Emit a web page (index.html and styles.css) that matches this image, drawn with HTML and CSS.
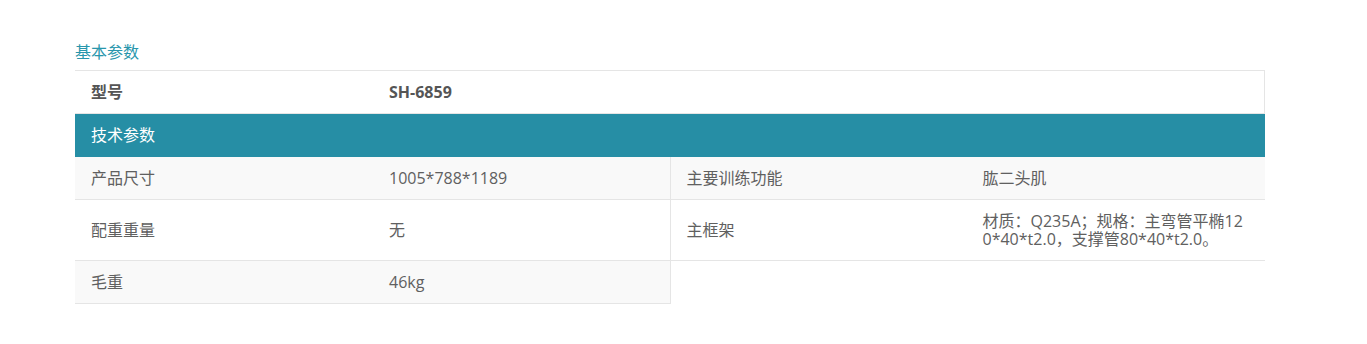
FILE: index.html
```html
<!DOCTYPE html>
<html lang="zh-CN">
<head>
  <meta charset="UTF-8">
  <meta name="viewport" content="width=device-width, initial-scale=1.0">
  <title>SH-6859 参数</title>
  <link rel="stylesheet" href="styles.css">
</head>
<body>
  <div class="params">
    <h3 class="params-title">基本参数</h3>

    <div class="model-row">
      <span class="cell label">型号</span>
      <span class="cell value">SH-6859</span>
    </div>

    <div class="section-head">技术参数</div>

    <div class="spec-list">
      <div class="spec-row">
        <div class="spec-item">
          <span class="cell label">产品尺寸</span>
          <span class="cell value">1005*788*1189</span>
        </div>
        <div class="spec-item">
          <span class="cell label">主要训练功能</span>
          <span class="cell value">肱二头肌</span>
        </div>
      </div>
      <div class="spec-row">
        <div class="spec-item">
          <span class="cell label">配重重量</span>
          <span class="cell value">无</span>
        </div>
        <div class="spec-item">
          <span class="cell label">主框架</span>
          <span class="cell value">材质：Q235A；规格：主弯管平椭120*40*t2.0，支撑管80*40*t2.0。</span>
        </div>
      </div>
      <div class="spec-row">
        <div class="spec-item">
          <span class="cell label">毛重</span>
          <span class="cell value">46kg</span>
        </div>
      </div>
    </div>
  </div>
</body>
</html>
```

FILE: styles.css
```css
:root {
  --teal: #268ea5;
  --title: #2896ac;
  --text: #606060;
  --line: #e5e5e5;
  --stripe: #f9f9f9;
}
body {
  margin: 0;
  background: #fff;
  color: var(--text);
  font-family: "Open Sans", "Noto Sans CJK SC", sans-serif;
  font-size: 16px;
}
.params {
  width: 1190px;
  margin: 0 0 0 75px;
  padding-top: 44px;
}
.params-title {
  margin: 0 0 9px 0;
  font-size: 16px;
  font-weight: 400;
  line-height: 17px;
  color: var(--title);
}
.cell {
  box-sizing: border-box;
  padding: 12px 16px;
  line-height: 18px;
}
.model-row {
  display: flex;
  border-top: 1px solid var(--line);
  border-right: 1px solid var(--line);
  border-bottom: 1px solid var(--line);
}
.model-row .cell {
  font-weight: 700;
  color: #555;
}
.model-row .label {
  width: 298px;
}
.section-head {
  background: var(--teal);
  color: #fff;
  padding: 12px 16px 13px;
  line-height: 18px;
}
.spec-row {
  display: flex;
}
.spec-item {
  width: 595px;
  display: flex;
  align-items: center;
  border-bottom: 1px solid var(--line);
}
.spec-item:first-child {
  border-right: 1px solid var(--line);
}
.spec-row:nth-child(odd) .spec-item {
  background: var(--stripe);
}
.spec-item .label {
  width: 298px;
  flex-shrink: 0;
}
.spec-item + .spec-item .label {
  width: 296px;
}
.spec-item .value {
  flex: 1;
  word-break: break-all;
}
```
